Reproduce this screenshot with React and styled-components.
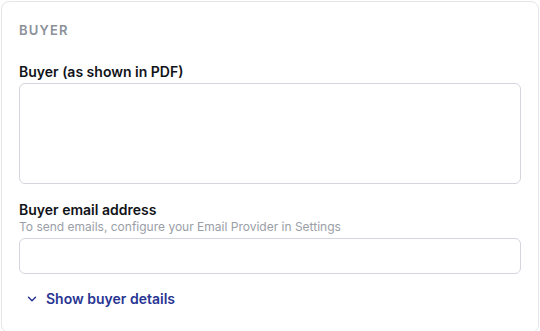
import React from "react";
import styled, { createGlobalStyle } from "styled-components";
import { ChevronDown } from "lucide-react";

const Global = createGlobalStyle`
  html, body { margin: 0; padding: 0; background: #ffffff; }
  body { font-family: Inter, "Noto Sans", sans-serif; -webkit-font-smoothing: antialiased; }
  * { box-sizing: border-box; }
`;

const Page = styled.div`
  padding: 1px;
  width: 540px;
`;

const Card = styled.section`
  border: 1px solid #e3e5e9;
  border-radius: 8px;
  background: #fff;
  padding: 20px 17px 23px;
  display: flex;
  flex-direction: column;
`;

const SectionTitle = styled.h2`
  margin: 0 0 25px;
  font-size: 13px;
  line-height: 16px;
  font-weight: 600;
  letter-spacing: 0.09em;
  color: #8b9099;
  text-transform: uppercase;
`;

const Field = styled.div`
  display: flex;
  flex-direction: column;
  margin-bottom: ${(p) => p.$mb || 0}px;
`;

const Label = styled.label`
  font-size: 14px;
  line-height: 18px;
  font-weight: 600;
  color: #111318;
`;

const Hint = styled.div`
  font-size: 12px;
  line-height: 16px;
  color: #9a9ea7;
  margin-bottom: 1px;
`;

const controlBase = `
  margin-top: 2px;
  width: 100%;
  border: 1px solid #d3d6dc;
  border-radius: 6px;
  background: #fff;
  font-family: Inter, sans-serif;
  font-size: 14px;
  padding: 8px 10px;
  outline: none;
`;

const TextArea = styled.textarea`
  ${controlBase}
  height: 101px;
  resize: none;
  display: block;
`;

const Input = styled.input`
  ${controlBase}
  height: 36px;
  display: block;
`;

const ToggleButton = styled.button`
  align-self: flex-start;
  display: flex;
  align-items: center;
  gap: 7px;
  margin: 0 0 0 6px;
  padding: 0;
  border: none;
  background: none;
  font-family: Inter, sans-serif;
  font-size: 14px;
  line-height: 20px;
  font-weight: 600;
  color: #283592;
  cursor: pointer;
`;

export default function App() {
  return (
    <>
      <Global />
      <Page>
        <Card>
          <SectionTitle>Buyer</SectionTitle>
          <Field $mb={17}>
            <Label>Buyer (as shown in PDF)</Label>
            <TextArea />
          </Field>
          <Field $mb={15}>
            <Label>Buyer email address</Label>
            <Hint>To send emails, configure your Email Provider in Settings</Hint>
            <Input type="email" />
          </Field>
          <ToggleButton type="button">
            <ChevronDown size={14} strokeWidth={2.5} />
            Show buyer details
          </ToggleButton>
        </Card>
      </Page>
    </>
  );
}
